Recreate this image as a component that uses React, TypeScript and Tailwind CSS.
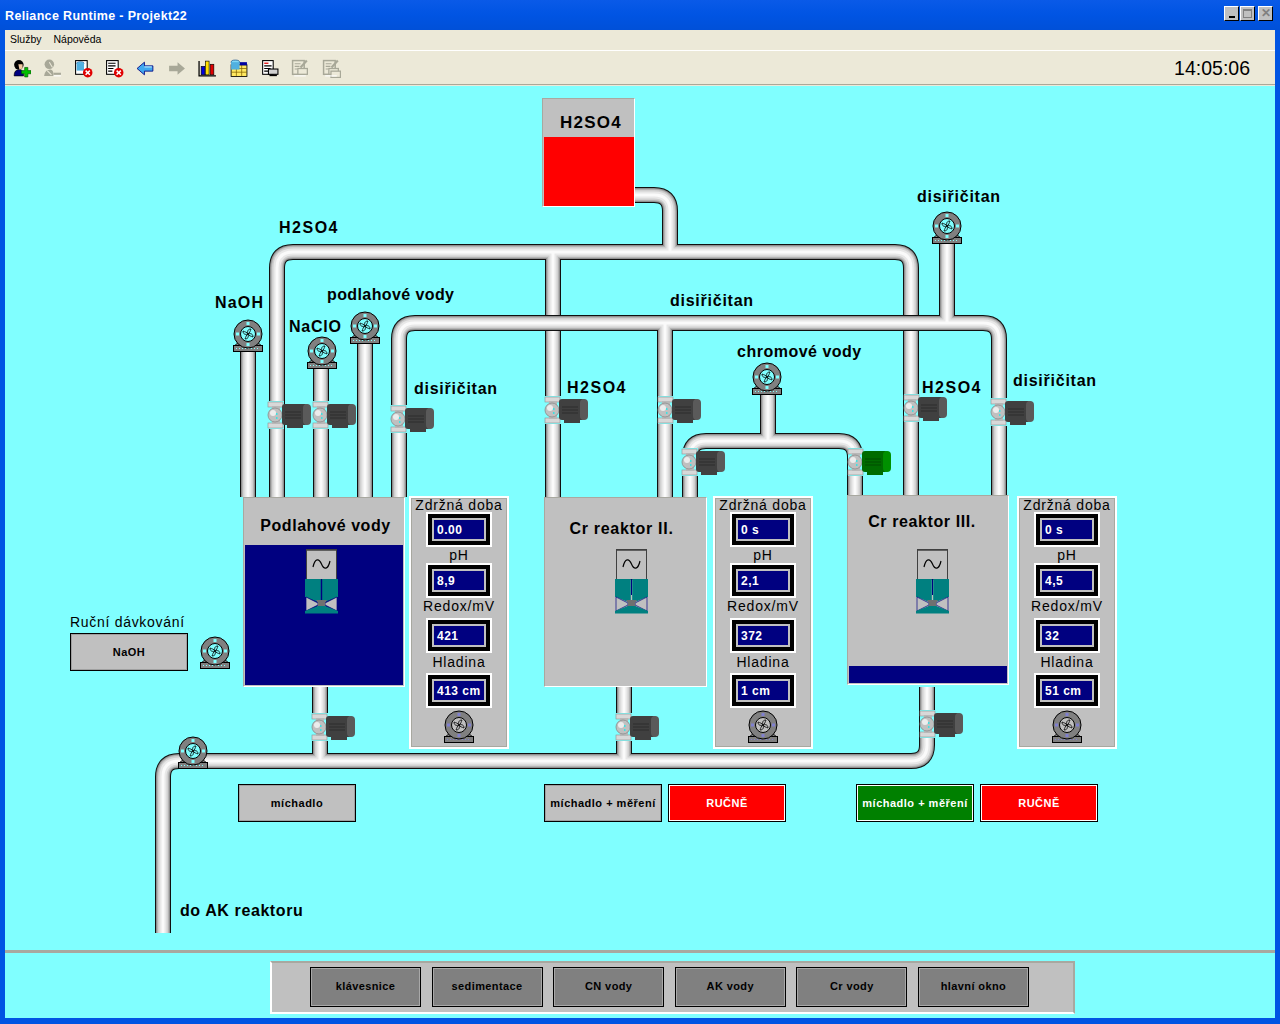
import React from "react";

const F = "font-['Liberation_Sans',Arial,sans-serif]";

const pipesFront = [
  "M399 497 V339 Q399 323 415 323 H983 Q999 323 999 339 V497",
  "M665 323 V497",
  "M947 240 V323",
];
const pipesBack = [
  "M634 195 H654 Q670 195 670 211 V252",
  "M277 497 V268 Q277 252 293 252 H895 Q911 252 911 268 V497",
  "M553 252 V497",
  "M248 350 V497",
  "M321 365 V497",
  "M365 340 V497",
  "M768 390 V441",
  "M690 497 V457 Q690 441 706 441 H839 Q855 441 855 457 V497",
  "M163 933 V777 Q163 761 179 761 H911 Q927 761 927 745 V687",
  "M320 687 V761",
  "M624 687 V761",
];
const layers: [number, string][] = [
  [16, "#101010"],
  [14, "#909090"],
  [12, "#b4b4b4"],
  [10, "#d0d0d0"],
  [7, "#e8e8e8"],
  [3, "#fafafa"],
];

function PipeGroup({ paths }: { paths: string[] }) {
  return (
    <>
      {layers.map(([w, c]) => (
        <g key={w} fill="none" stroke={c} strokeWidth={w}>
          {paths.map((d) => (
            <path key={d} d={d} />
          ))}
        </g>
      ))}
    </>
  );
}

function PumpShape({ x, y, panel }: { x: number; y: number; panel?: boolean }) {
  const dot = panel ? "#8080d0" : "#80ffff";
  const inner = panel ? "#c0c0c0" : "#80ffff";
  return (
    <g transform={`translate(${x} ${y})`}>
      <path d="M-9 8 L-14 12 H14 L9 8 Z" fill="#808080" stroke="#000" strokeWidth="0.8" />
      <rect x="-14.5" y="11.5" width="29" height="6" fill="#808080" stroke="#000" />
      <path d="M-12 14.5 H12" stroke={dot} strokeWidth="1" strokeDasharray="1 2" />
      <circle r="14" fill="#808080" stroke="#000" />
      <circle r="7.5" fill={inner} stroke="#000" />
      <path
        d="M0 0 C-1 -3 0 -5 3 -5 C2 -3 2 -1 0 0 C3 -1 5 0 5 3 C3 2 1 2 0 0 C1 3 0 5 -3 5 C-2 3 -2 1 0 0 C-3 1 -5 0 -5 -3 C-3 -2 -1 -2 0 0 Z"
        fill="none"
        stroke="#000"
        strokeWidth="0.8"
      />
      <rect x="-1.5" y="-12" width="3" height="3" fill={dot} />
      <rect x="-1.5" y="9" width="3" height="3" fill={dot} />
      <rect x="-12" y="-1.5" width="3" height="3" fill={dot} />
      <rect x="9" y="-1.5" width="3" height="3" fill={dot} />
    </g>
  );
}

function Valve({ x, y, green }: { x: number; y: number; green?: boolean }) {
  const c1 = green ? "#006c00" : "#404040";
  const c3 = green ? "#009000" : "#5a5a5a";
  const c4 = green ? "#004c00" : "#2c2c2c";
  return (
    <g transform={`translate(${x} ${y})`}>
      <rect x="-8" y="-14" width="16" height="28" fill="#80ffff" />
      <rect x="-8" y="-13" width="15" height="5" fill="#d8d8d8" stroke="#909090" strokeWidth="0.6" />
      <rect x="-8" y="8" width="15" height="5" fill="#d8d8d8" stroke="#909090" strokeWidth="0.6" />
      <rect x="-4" y="-9" width="8" height="18" fill="#b8b8b8" />
      <circle cx="-1" cy="0" r="7" fill="#c0c0c0" stroke="#8a8a8a" strokeWidth="0.8" />
      <circle cx="-3" cy="-2" r="3" fill="#ececec" />
      <rect x="0" y="-2" width="1.5" height="2" fill="#40e0e0" />
      <rect x="0" y="2" width="1.5" height="2" fill="#40e0e0" />
      <rect x="11" y="9" width="16" height="4" fill={c1} />
      <path d="M9 -11 H29 Q35 -11 35 -1 Q35 10 29 10 H9 Q6 10 6 7 V-8 Q6 -11 9 -11 Z" fill={c1} />
      <rect x="27" y="-11" width="8" height="21" rx="4" fill={c3} />
      <path d="M9 -3 H25 M9 0 H25 M9 3 H25" stroke={c4} strokeWidth="1" />
    </g>
  );
}

function Scene() {
  const pumps = [
    [248, 334], [322, 351], [365, 326], [947, 226], [767, 377], [193, 751], [215, 651],
  ];
  const valves = [
    [276, 415], [321, 415], [399, 419], [553, 410], [666, 410], [912, 408], [999, 412],
    [690, 462], [320, 727], [624, 727], [928, 724],
  ];
  return (
    <svg className="absolute left-0 top-0" width="1280" height="1024">
      <PipeGroup paths={pipesBack} />
      <PipeGroup paths={pipesFront} />
      {valves.map(([x, y]) => (
        <Valve key={`${x}-${y}`} x={x} y={y} />
      ))}
      <Valve x={856} y={462} green />
      {pumps.map(([x, y]) => (
        <PumpShape key={`${x}-${y}`} x={x} y={y} />
      ))}
    </svg>
  );
}

function Agitator({ className }: { className: string }) {
  return (
    <svg className={`absolute ${className}`} width="34" height="65" viewBox="0 0 34 65">
      <rect x="1.5" y="0.5" width="30" height="30" fill="#c0c0c0" stroke="#404040" />
      <rect x="2" y="1" width="29" height="1" fill="#606060" />
      <path d="M8 18 C10 9 14 9 16.5 15 C19 21 23 21 25 12" fill="none" stroke="#000" strokeWidth="1.2" />
      <path d="M0 30 H15.8 V53 H13 L1 48 H0 Z M17.2 30 H33 V48 H32 L20 53 H17.2 Z" fill="#008080" />
      <path d="M16.5 30 V46" stroke="#000080" strokeWidth="1" />
      <path d="M1 48 L13 54 V56 L1 62 Z M32 48 L20 54 V56 L32 62 Z" fill="#c0c0c0" stroke="#000080" strokeWidth="0.7" />
      <path d="M11 51 H22 L20 54 V56 L22 59 H11 L13 56 V54 Z" fill="#707070" />
      <path d="M0 64.5 H33 V62 L20 57 H13 L0 62 Z" fill="#008080" />
    </svg>
  );
}

function Field({ value }: { value: string }) {
  return (
    <div className="h-[35px] w-[66px] border-[2px] border-white bg-black p-[4px]">
      <div className="flex h-full items-center border-[2px] border-[#c0c0c0] bg-[#000080] pl-[3px] text-[12px] font-bold tracking-[0.5px] text-white">
        {value}
      </div>
    </div>
  );
}

function Info({ className, v }: { className: string; v: string[] }) {
  return (
    <div
      className={`absolute flex h-[253px] w-[100px] flex-col items-center border-[2px] border-white bg-[#c0c0c0] text-[14px] tracking-[0.8px] text-black shadow-[inset_0_0_0_1px_#a8a8a0] ${className}`}
    >
      <div className="flex h-[14px] items-center whitespace-nowrap">Zdržná doba</div>
      <Field value={v[0]} />
      <div className="flex h-[16px] items-center">pH</div>
      <Field value={v[1]} />
      <div className="flex h-[20px] items-center pb-[3px]">Redox/mV</div>
      <Field value={v[2]} />
      <div className="flex h-[20px] items-center pb-[2px]">Hladina</div>
      <Field value={v[3]} />
      <svg className="mt-[2px]" width="32" height="34" viewBox="-16 -15 32 34">
        <PumpShape x={0} y={0} panel />
      </svg>
    </div>
  );
}

function Btn({ className, label, tone }: { className: string; label: string; tone: "gray" | "green" | "red" }) {
  const t =
    tone === "gray"
      ? "bg-[#c0c0c0] text-black shadow-[inset_0_0_0_1px_#a0a0a0]"
      : tone === "green"
        ? "bg-[#008000] text-white shadow-[inset_0_0_0_1px_#ffffff]"
        : "bg-[#ff0000] text-white shadow-[inset_0_0_0_1px_#ffffff]";
  return (
    <div
      className={`absolute flex h-[38px] w-[118px] items-center justify-center whitespace-nowrap border border-black text-[11px] font-bold tracking-[0.5px] ${t} ${className}`}
    >
      {label}
    </div>
  );
}

function Lbl({ className, children }: { className: string; children: React.ReactNode }) {
  return (
    <div className={`absolute whitespace-nowrap text-[16px] font-bold leading-[18px] text-black ${className}`}>
      {children}
    </div>
  );
}

function Tank({ className, children }: { className: string; children?: React.ReactNode }) {
  return (
    <div
      className={`absolute flex flex-col overflow-hidden border-[1px] border-b-white border-l-[#a8a8a0] border-r-white border-t-[#a8a8a0] bg-[#c0c0c0] ${className}`}
    >
      {children}
    </div>
  );
}

const ICON = "h-[19px] w-[19px] shrink-0";

function Person({ disabled }: { disabled?: boolean }) {
  if (disabled) {
    return (
      <svg className={ICON} viewBox="0 0 18 18">
        <circle cx="6" cy="5" r="4.5" fill="#a8a898" />
        <path d="M1 16 Q2 10 7 10 Q10 10 10 16 Z" fill="#a8a898" />
        <path d="M6 3 L9 8 M4 11 L8 15" stroke="#ece9d8" strokeWidth="1" />
        <path d="M10 14 H17" stroke="#a8a898" strokeWidth="2" />
        <path d="M10 16 H17" stroke="#ffffff" strokeWidth="1" />
      </svg>
    );
  }
  return (
    <svg className={ICON} viewBox="0 0 18 18">
      <path d="M2 16 Q2 10 7 10 Q11 10 11 16 Z" fill="#000080" stroke="#000" strokeWidth="0.6" />
      <circle cx="6.5" cy="5.5" r="4.5" fill="#000" />
      <path d="M6 5 L10 5 L10 9 L7 10 Z" fill="#f0c8a0" />
      <path d="M12 8 H15 V11 H18 V14 H15 V17 H12 V14 H9 V11 H12 Z" fill="#00c000" stroke="#005000" strokeWidth="0.6" />
    </svg>
  );
}

function RedX() {
  return (
    <g>
      <circle cx="13" cy="13" r="4.5" fill="#e00000" />
      <path d="M11 11 L15 15 M15 11 L11 15" stroke="#fff" strokeWidth="1.4" />
    </g>
  );
}

function DisabledDoc({ stack }: { stack?: boolean }) {
  return (
    <svg className={ICON} viewBox="0 0 18 18">
      <rect x="1.5" y="1.5" width="11" height="13" fill="none" stroke="#a8a898" strokeWidth="1.4" />
      <path d="M3.5 4.5 H9 M3.5 7 H8 M3.5 9.5 H6" stroke="#a8a898" strokeWidth="1" />
      <path d="M9 8 L15 1.5" stroke="#a8a898" strokeWidth="2" />
      <rect x="6.5" y="9" width="9" height="5.5" fill="#ece9d8" stroke="#a8a898" strokeWidth="1.2" />
      {stack && <rect x="8.5" y="11.5" width="9" height="6" fill="#ece9d8" stroke="#a8a898" strokeWidth="1.2" />}
      <path d="M3 16 H14" stroke="#ffffff" strokeWidth="1" />
    </svg>
  );
}

function Toolbar() {
  return (
    <div className="flex h-[34px] shrink-0 items-center gap-[12px] border-b border-[#aca899] bg-[#ece9d8] pl-[7px] pr-[25px] pt-[2px]">
      <Person />
      <Person disabled />
      <svg className={ICON} viewBox="0 0 18 18">
        <rect x="1.5" y="1.5" width="11" height="13" fill="#fff" stroke="#000" />
        <ellipse cx="6" cy="4" rx="3.5" ry="1.5" fill="#60c0f0" stroke="#004080" strokeWidth="0.5" />
        <rect x="2.5" y="4" width="7" height="7" fill="#50b0e0" />
        <RedX />
      </svg>
      <svg className={ICON} viewBox="0 0 18 18">
        <rect x="1.5" y="1.5" width="11" height="13" fill="#fff" stroke="#000" />
        <path d="M3 4 H10 M3 6.5 H10 M3 9 H8 M3 11.5 H7" stroke="#000" strokeWidth="1" />
        <RedX />
      </svg>
      <svg className={ICON} viewBox="0 0 18 18">
        <path d="M1 9 L8 3 V6.5 H16 V11.5 H8 V15 Z" fill="#40a8f0" stroke="#000080" strokeWidth="0.8" />
        <path d="M8 7.5 H15" stroke="#c0f0ff" strokeWidth="1" />
      </svg>
      <svg className={ICON} viewBox="0 0 18 18">
        <path d="M17 9 L10 3 V6.5 H2 V11.5 H10 V15 Z" fill="#a8a898" />
      </svg>
      <svg className={ICON} viewBox="0 0 18 18">
        <path d="M1 2 V16 H17" fill="none" stroke="#000" strokeWidth="1.2" />
        <rect x="3" y="7" width="3.5" height="8" fill="#0000e0" stroke="#000" strokeWidth="0.6" />
        <rect x="7" y="2" width="3.5" height="13" fill="#ffe000" stroke="#000" strokeWidth="0.6" />
        <rect x="11.5" y="5" width="3.5" height="10" fill="#e00000" stroke="#000" strokeWidth="0.6" />
      </svg>
      <svg className={ICON} viewBox="0 0 18 18">
        <rect x="2" y="5.5" width="15" height="11" fill="#ffe860" stroke="#000" strokeWidth="0.8" />
        <path d="M2 9 H17 M2 12.5 H17 M7 5 V16 M12 5 V16" stroke="#806000" strokeWidth="0.7" />
        <rect x="10" y="3" width="7" height="3" fill="#0000a0" />
        <ellipse cx="6" cy="3" rx="4" ry="2" fill="#80d8f8" stroke="#004080" strokeWidth="0.6" />
        <rect x="2" y="3" width="8" height="7" fill="#50b0e0" />
      </svg>
      <svg className={ICON} viewBox="0 0 18 18">
        <rect x="2.5" y="1.5" width="10" height="13" fill="#fff" stroke="#000" />
        <path d="M4 4 H8" stroke="#e00000" strokeWidth="1.2" />
        <path d="M4 6.5 H11 M4 9 H10 M4 11.5 H8" stroke="#000" strokeWidth="1" />
        <rect x="8" y="9.5" width="9" height="5" fill="#d0d0d0" stroke="#000" />
        <path d="M9 15.5 H16" stroke="#000" strokeWidth="1.5" />
      </svg>
      <DisabledDoc />
      <DisabledDoc stack />
      <div className={`ml-auto text-[19.5px] leading-none text-black ${F}`}>14:05:06</div>
    </div>
  );
}

function WinBtn({ children }: { children: React.ReactNode }) {
  return (
    <div className="flex h-[15px] w-[15px] items-center justify-center border border-b-black border-l-white border-r-black border-t-white bg-[#c0c0c0]">
      {children}
    </div>
  );
}

function Canvas() {
  return (
    <div className="relative min-h-0 flex-1 overflow-hidden bg-[#80ffff]">
      <div className={`absolute left-[-5px] top-[-86px] h-[1024px] w-[1280px] ${F}`}>
        <Scene />

        <Lbl className="left-[279px] top-[219px] tracking-[1.5px]">H2SO4</Lbl>
        <Lbl className="left-[215px] top-[294px] tracking-[1.2px]">NaOH</Lbl>
        <Lbl className="left-[289px] top-[318px] tracking-[0.75px]">NaClO</Lbl>
        <Lbl className="left-[327px] top-[286px] tracking-[0.4px]">podlahové vody</Lbl>
        <Lbl className="left-[414px] top-[380px] tracking-[0.75px]">disiřičitan</Lbl>
        <Lbl className="left-[567px] top-[379px] tracking-[1.5px]">H2SO4</Lbl>
        <Lbl className="left-[670px] top-[292px] tracking-[0.75px]">disiřičitan</Lbl>
        <Lbl className="left-[737px] top-[343px] tracking-[0.5px]">chromové vody</Lbl>
        <Lbl className="left-[922px] top-[379px] tracking-[1.5px]">H2SO4</Lbl>
        <Lbl className="left-[1013px] top-[372px] tracking-[0.75px]">disiřičitan</Lbl>
        <Lbl className="left-[917px] top-[188px] tracking-[0.75px]">disiřičitan</Lbl>
        <Lbl className="left-[180px] top-[902px] tracking-[0.6px]">do AK reaktoru</Lbl>
        <div className="absolute left-[70px] top-[614px] whitespace-nowrap text-[14px] font-medium leading-[16px] tracking-[0.7px] text-black">
          Ruční dávkování
        </div>

        <Tank className="left-[542px] top-[98px] h-[109px] w-[93px]">
          <div className="flex h-[38px] items-end justify-center pb-[4px] pl-[5px] text-[17px] font-bold leading-[20px] tracking-[1.3px] text-black">
            H2SO4
          </div>
          <div className="ml-[1px] flex-1 bg-[#ff0000]" />
        </Tank>

        <Tank className="left-[243px] top-[497px] h-[190px] w-[162px]">
          <div className="flex h-[47px] items-center justify-center pl-[3px] pt-[8px] text-[16px] font-bold tracking-[0.55px] text-black">
            Podlahové vody
          </div>
          <div className="mx-[1px] mb-[1px] flex-1 bg-[#000080]" />
        </Tank>
        <Agitator className="left-[305px] top-[549px]" />
        <Info className="left-[409px] top-[496px]" v={["0.00", "8,9", "421", "413 cm"]} />

        <Tank className="left-[544px] top-[497px] h-[190px] w-[163px]">
          <div className="flex h-[47px] items-center justify-center pr-[8px] pt-[14px] text-[16px] font-bold tracking-[0.7px] text-black">
            Cr reaktor II.
          </div>
        </Tank>
        <Agitator className="left-[615px] top-[549px]" />
        <Info className="left-[713px] top-[496px]" v={["0 s", "2,1", "372", "1 cm"]} />

        <Tank className="left-[847px] top-[495px] h-[190px] w-[162px]">
          <div className="flex h-[51px] items-center justify-center pr-[12px] text-[16px] font-bold tracking-[0.6px] text-black">
            Cr reaktor III.
          </div>
          <div className="flex-1" />
          <div className="mx-[1px] mb-[1px] h-[17px] bg-[#000080]" />
        </Tank>
        <Agitator className="left-[916px] top-[549px]" />
        <Info className="left-[1017px] top-[496px]" v={["0 s", "4,5", "32", "51 cm"]} />

        <Btn className="left-[70px] top-[633px]" label="NaOH" tone="gray" />
        <Btn className="left-[238px] top-[784px]" label="míchadlo" tone="gray" />
        <Btn className="left-[544px] top-[784px]" label="míchadlo + měření" tone="gray" />
        <Btn className="left-[668px] top-[784px]" label="RUČNĚ" tone="red" />
        <Btn className="left-[856px] top-[784px]" label="míchadlo + měření" tone="green" />
        <Btn className="left-[980px] top-[784px]" label="RUČNĚ" tone="red" />
      </div>
    </div>
  );
}

function NavBtn({ label }: { label: string }) {
  return (
    <div className="flex h-[40px] w-[111px] items-center justify-center border border-black bg-[#808080] text-[11px] font-bold tracking-[0.4px] text-black shadow-[inset_0_0_0_1px_#a8a8a8]">
      {label}
    </div>
  );
}

export default function App() {
  const nav = ["klávesnice", "sedimentace", "CN vody", "AK vody", "Cr vody", "hlavní okno"];
  return (
    <div className={`flex h-[1024px] w-[1280px] flex-col overflow-hidden bg-[#0054e3] ${F}`}>
      <div className="flex h-[30px] shrink-0 items-center justify-between bg-gradient-to-b from-[#0a5ae8] via-[#0054e3] to-[#0050d8] pl-[5px] pr-[7px]">
        <div className="pt-[2px] text-[12.5px] font-bold tracking-[0.35px] text-white">Reliance Runtime - Projekt22</div>
        <div className="flex items-center gap-[1px] pb-[4px]">
          <WinBtn>
            <div className="mt-[7px] h-[2px] w-[6px] bg-black" />
          </WinBtn>
          <WinBtn>
            <div className="h-[9px] w-[9px] border border-t-2 border-[#808080]" />
          </WinBtn>
          <div className="ml-[2px]">
            <WinBtn>
              <span className="text-[12px] font-bold leading-none text-[#808080]">✕</span>
            </WinBtn>
          </div>
        </div>
      </div>

      <div className="mx-[5px] flex min-h-0 flex-1 flex-col">
        <div className="flex h-[20px] shrink-0 items-center gap-[12px] bg-[#ece9d8] pl-[5px] text-[10.5px] text-black">
          <span>Služby</span>
          <span>Nápověda</span>
        </div>
        <div className="h-[1px] shrink-0 bg-white" />
        <Toolbar />
        <div className="h-[1px] shrink-0 bg-[#ece9d8]" />
        <Canvas />
        <div className="h-[3px] shrink-0 bg-[#a8a8a0]" />
        <div className="flex h-[65px] shrink-0 items-start bg-[#80ffff] pl-[265px] pt-[8px]">
          <div className="flex h-[53px] w-[805px] items-center gap-[10.6px] border-[2px] border-b-white border-l-white border-r-[#a8a8a0] border-t-[#a8a8a0] bg-[#c0c0c0] pb-[2px] pl-[38px]">
            {nav.map((n) => (
              <NavBtn key={n} label={n} />
            ))}
          </div>
        </div>
      </div>
      <div className="h-[6px] shrink-0" />
    </div>
  );
}
